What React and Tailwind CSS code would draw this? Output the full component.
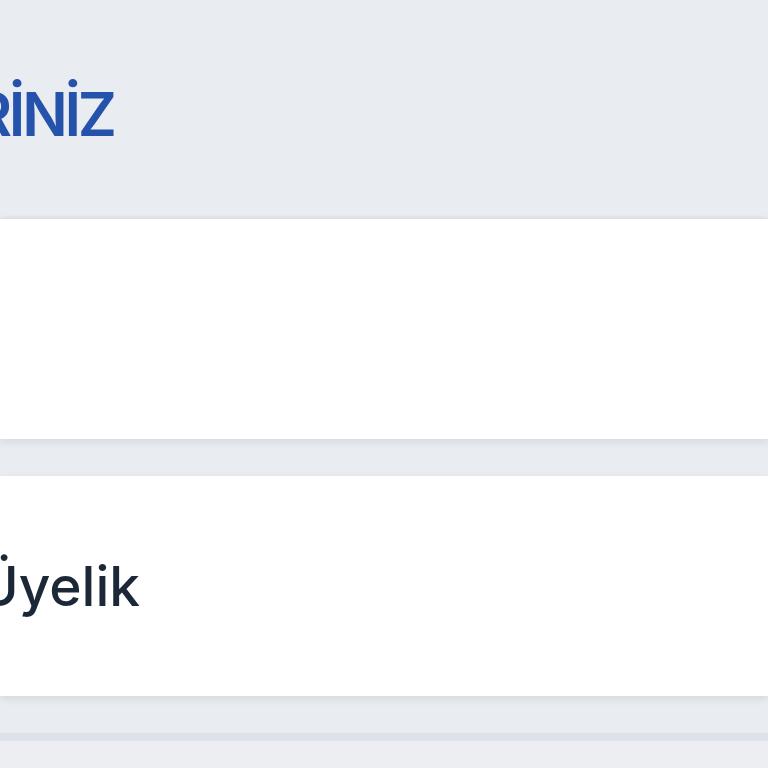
export default function App() {
  return (
    <div className="w-[768px] h-[768px] overflow-hidden bg-[#e9edf2] font-['Inter','Noto_Sans',sans-serif]">
      {/* Section title */}
      <div className="h-[219px] pt-[8px] flex items-center">
        <h2 className="-ml-[27px] text-[60px] leading-none font-semibold tracking-[-0.055em] text-[#2553ac] whitespace-nowrap">
          RİNİZ
        </h2>
      </div>

      {/* Cards */}
      <div className="flex flex-col gap-[37px]">
        <div className="h-[220px] bg-white shadow-[0_-2px_3px_rgba(0,0,0,0.05),0_3px_8px_rgba(0,0,0,0.09)]" />
        <div className="h-[220px] bg-white shadow-[0_3px_8px_rgba(0,0,0,0.09)] flex items-center">
          <span className="-ml-[22px] text-[55px] leading-none font-medium text-[#1c2738] whitespace-nowrap">
            Üyelik
          </span>
        </div>
      </div>

      <div className="mt-[37px] h-[40px] border-t-[8px] border-[#dde2ea] bg-[#eceef2]" />
    </div>
  );
}
